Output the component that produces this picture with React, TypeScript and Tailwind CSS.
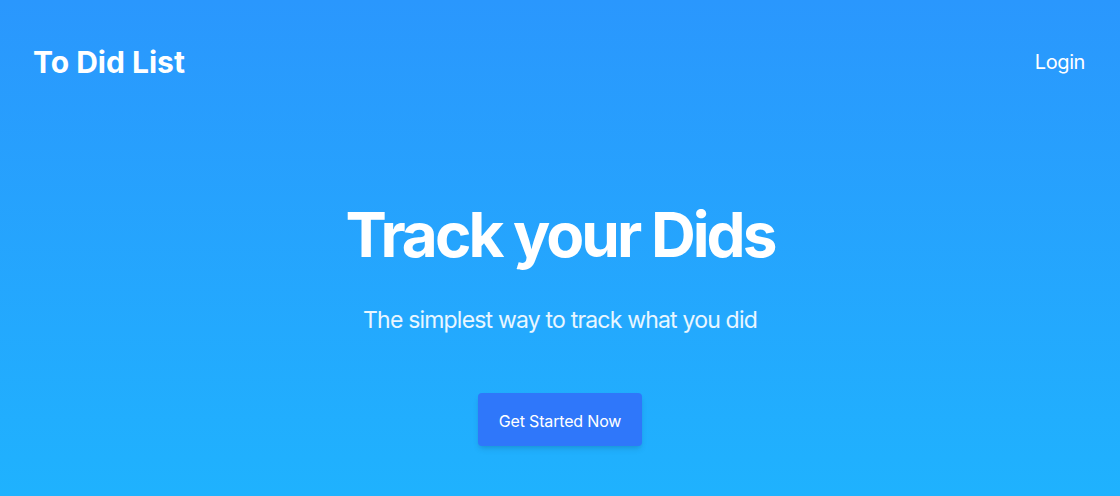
export default function App() {
  return (
    <div
      className="min-h-[496px] w-full bg-gradient-to-b from-[#2a97fd] to-[#1fb2fe] text-white"
      style={{ fontFamily: 'Inter, "Noto Sans", sans-serif' }}
    >
      <header className="flex h-[124px] items-center justify-between px-[33px]">
        <h1 className="text-[30px] font-bold leading-9">To Did List</h1>
        <a href="#" className="pr-[2px] text-xl font-normal tracking-[-0.02em]">
          Login
        </a>
      </header>
      <main className="flex flex-col items-center">
        <h2 className="mt-[80px] text-[62px] font-bold leading-none tracking-[-0.048em]">
          Track your Dids
        </h2>
        <p className="mt-[38px] text-[23px] font-normal leading-8 tracking-[-0.035em] text-white/90">
          The simplest way to track what you did
        </p>
        <button className="mt-[57px] h-[53px] rounded bg-[#2f77fa] px-[21px] pt-[3px] text-base tracking-[-0.01em] shadow-md">
          Get Started Now
        </button>
      </main>
    </div>
  )
}
